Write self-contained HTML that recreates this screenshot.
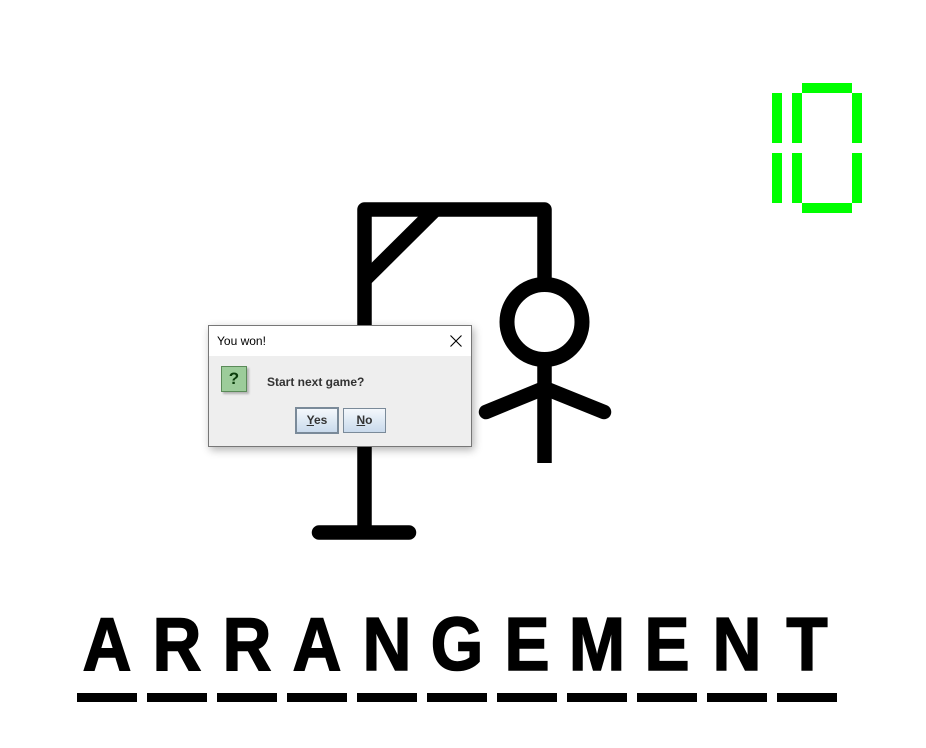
<!DOCTYPE html>
<html><head><style>
body{margin:0;width:926px;height:748px;background:#fff;position:relative;overflow:hidden;font-family:"Liberation Sans",sans-serif}
.seg{position:absolute;background:#00ff00}
.L{position:absolute;top:599px;width:70px;text-align:center;font-weight:bold;font-size:75px;line-height:90px;transform:scaleX(0.9);-webkit-text-stroke:1.6px #000}
.D{position:absolute;top:693px;width:60px;height:9px;background:#000}
.dlg{position:absolute;left:208px;top:325px;width:262px;height:120px;border:1px solid #777;background:#eeeeee;box-shadow:2px 3px 8px rgba(0,0,0,.3)}
.tb{height:30px;background:#fff;font-size:12px;line-height:30px;padding-left:8px;position:relative}
.btn{position:absolute;top:82px;height:23px;border:1px solid #7a8a99;background:linear-gradient(#f4f8fc,#c9daec);font-size:12px;font-weight:bold;line-height:23px;text-align:center;color:#333}
</style></head><body>
<div class="seg" style="left:772px;top:93px;width:10px;height:50px"></div>
<div class="seg" style="left:772px;top:153px;width:10px;height:50px"></div>
<div class="seg" style="left:792px;top:93px;width:10px;height:50px"></div>
<div class="seg" style="left:792px;top:153px;width:10px;height:50px"></div>
<div class="seg" style="left:802px;top:83px;width:50px;height:10px"></div>
<div class="seg" style="left:852px;top:93px;width:10px;height:50px"></div>
<div class="seg" style="left:852px;top:153px;width:10px;height:50px"></div>
<div class="seg" style="left:802px;top:203px;width:50px;height:10px"></div>

<svg width="926" height="748" style="position:absolute;left:0;top:0" fill="none" stroke="#000" stroke-width="14.5">
<path d="M364.5 532 V209.5 H544.5 V280" stroke-linejoin="round"/>
<path d="M364.5 280 L436 209"/>
<path d="M319 532.5 H409" stroke-linecap="round"/>
<circle cx="544.5" cy="322" r="37.5" stroke-width="15"/>
<path d="M544.5 360 V463"/>
<path d="M486 412 L544.5 388 L604 412" stroke-linecap="round" stroke-linejoin="round"/>
</svg>

<div class="dlg">
<div class="tb">You won!<svg width="12" height="12" style="position:absolute;right:9px;top:9px" stroke="#000" stroke-width="1.1"><path d="M0.5 0.5 L11.5 11.5 M11.5 0.5 L0.5 11.5"/></svg></div>
<div style="position:absolute;left:12px;top:40px;width:24px;height:24px;background:#9ccc9a;border:1px solid #5a8a58;box-shadow:2px 2px 2px rgba(0,0,0,.25);text-align:center;font-weight:bold;font-size:17px;line-height:24px;color:#0b3d0b">?</div>
<div style="position:absolute;left:58px;top:49px;font-size:12px;font-weight:bold;color:#333">Start next game?</div>
<div class="btn" style="left:86px;width:40px;border:2px solid #7a8a99;top:81px"><u>Y</u>es</div>
<div class="btn" style="left:134px;width:41px"><u>N</u>o</div>
</div>

<div class="L" style="left:72px">A</div><div class="L" style="left:142px">R</div><div class="L" style="left:212px">R</div><div class="L" style="left:282px">A</div><div class="L" style="left:352px">N</div><div class="L" style="left:422px">G</div><div class="L" style="left:492px">E</div><div class="L" style="left:562px">M</div><div class="L" style="left:632px">E</div><div class="L" style="left:702px">N</div><div class="L" style="left:772px">T</div>
<div class="D" style="left:77px"></div><div class="D" style="left:147px"></div><div class="D" style="left:217px"></div><div class="D" style="left:287px"></div><div class="D" style="left:357px"></div><div class="D" style="left:427px"></div><div class="D" style="left:497px"></div><div class="D" style="left:567px"></div><div class="D" style="left:637px"></div><div class="D" style="left:707px"></div><div class="D" style="left:777px"></div>
</body></html>
